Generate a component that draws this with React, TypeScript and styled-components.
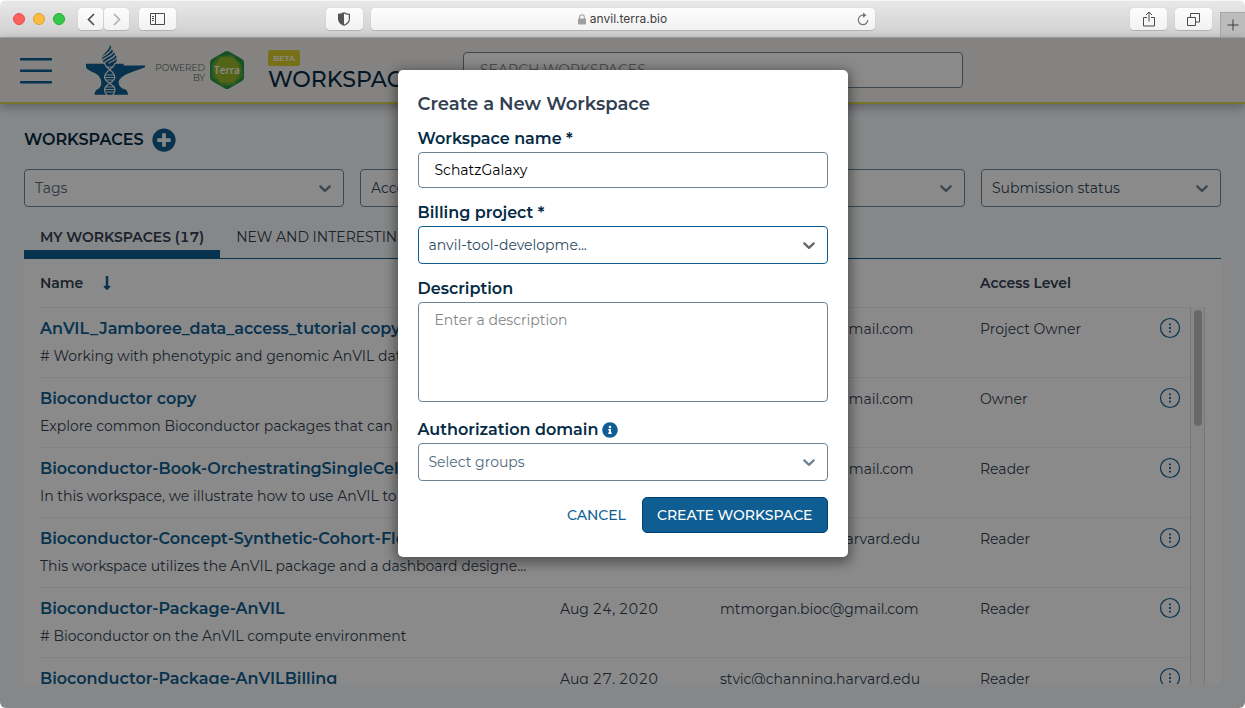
import React from "react";
import styled, { createGlobalStyle } from "styled-components";
import { FaInfoCircle, FaPlusCircle, FaLongArrowAltDown } from "react-icons/fa";

const color = {
  primary: "#0f5e93",
  primaryDark: "#004277",
  navy: "#042b45",
  text: "#333f52",
  field: "#2f4a5f",
  placeholder: "#506a7c",
  border: "#6f8495",
  rule: "#eff0f2",
  page: "#f7f9fc",
};

const GlobalStyle = createGlobalStyle`
  *, *::before, *::after { box-sizing: border-box; }
  body {
    margin: 0;
    background: #fff;
    color: ${color.text};
    font-family: Montserrat, Inter, "Open Sans", sans-serif;
    font-size: 14px;
    font-variant-numeric: tabular-nums;
    line-height: 20px;
  }
  button, input, select, textarea { font: inherit; color: inherit; }
  h1, h2 { margin: 0; }
  svg { display: block; flex: none; }
`;

/* ---------- browser window ---------- */

const Window = styled.div`
  display: flex;
  flex-direction: column;
  height: 100vh;
  min-height: 600px;
  border-radius: 6px;
  overflow: hidden;
`;

const Toolbar = styled.div`
  display: grid;
  grid-template-columns: 1fr minmax(0, 504px) 1fr;
  column-gap: 8px;
  flex: none;
  height: 38px;
  padding-top: 7px;
  background: linear-gradient(#e8e8e8, #cfcfcf);
  border-top: 1px solid #f6f6f6;
  border-bottom: 1px solid #a8a8a8;
`;

const ToolGroup = styled.div<{ $end?: boolean }>`
  display: flex;
  align-items: flex-start;
  justify-content: ${(p) => (p.$end ? "flex-end" : "flex-start")};
  gap: 8px;
  padding-left: ${(p) => (p.$end ? 0 : 13)}px;
`;

const Lights = styled.div`
  display: flex;
  align-items: center;
  gap: 8px;
  height: 22px;
  margin-right: 5px;
`;

const Light = styled.span<{ $fill: string; $edge: string }>`
  width: 12px;
  height: 12px;
  border-radius: 50%;
  background: ${(p) => p.$fill};
  border: 1px solid ${(p) => p.$edge};
`;

const Pair = styled.div`
  display: flex;
  gap: 1px;
  margin-right: 2px;
`;

const ToolButton = styled.button<{ $width?: number }>`
  display: flex;
  align-items: center;
  justify-content: center;
  width: ${(p) => p.$width ?? 37}px;
  height: 22px;
  padding: 0;
  border: 0;
  border-radius: 4px;
  background: linear-gradient(#fdfdfd, #f2f2f2);
  box-shadow: 0 0 1px #b0b0b0, 0 1px 0 #b4b4b4;
  color: #4a4a4a;

  &:disabled { color: #b0b0b0; }
`;

const Spring = styled.span`
  flex: 1;
`;

const AddressBar = styled.div`
  display: grid;
  grid-template-columns: 24px 1fr 24px;
  align-items: center;
  height: 22px;
  border-radius: 4px;
  background: linear-gradient(#fdfdfd, #f2f2f2);
  box-shadow: 0 0 1px #b0b0b0, 0 1px 0 #b4b4b4;
`;

const Address = styled.div`
  display: flex;
  grid-column: 2;
  align-items: center;
  justify-content: center;
  gap: 4px;
  color: #404040;
  font: 12px/20px Inter, "Open Sans", sans-serif;
`;

const PlainButton = styled.button`
  display: flex;
  align-items: center;
  justify-content: center;
  padding: 0;
  border: 0;
  background: none;
`;

const NewTab = styled(PlainButton)`
  align-self: flex-end;
  width: 25px;
  height: 25px;
  border-left: 1px solid #a6a6a6;
  border-top: 1px solid #a6a6a6;
  background: #bcbcbc;
  color: #3c3c3c;
`;

const Viewport = styled.div`
  position: relative;
  display: flex;
  flex-direction: column;
  flex: 1;
  min-height: 0;
  background: ${color.page};
`;

/* ---------- app header ---------- */

const Header = styled.header`
  display: flex;
  align-items: center;
  flex: none;
  height: 66px;
  padding: 0 20px;
  background: #f4f3ee;
  border-bottom: 2px solid #e0d94a;
  box-shadow: 0 3px 10px rgba(0, 0, 0, 0.3);
`;

const MenuButton = styled(PlainButton)`
  padding-top: 2px;
`;

const Brand = styled.a`
  display: flex;
  align-items: center;
  margin-left: 34px;
  color: #666;
  text-decoration: none;
`;

const Powered = styled.span`
  width: 59px;
  margin-right: 5px;
  padding-top: 6px;
  text-align: right;
  font-size: 9px;
  line-height: 10px;
`;

const HexText = styled.text`
  font: 600 10px "Open Sans", sans-serif;
  fill: #fff;
`;

const TitleBlock = styled.div`
  display: flex;
  flex-direction: column;
  align-items: flex-start;
  width: 219px;
  padding: 4px 0 0 24px;
`;

const Beta = styled.span`
  padding: 0 5px;
  border-radius: 2px;
  background: #dcd02a;
  color: #fff;
  font-size: 8px;
  font-weight: 600;
  line-height: 16px;
`;

const PageTitle = styled.h1`
  color: ${color.navy};
  font-size: 22px;
  font-weight: 500;
  line-height: 28px;
`;

const Search = styled.input`
  flex: 0 1 500px;
  height: 36px;
  padding: 0 16px;
  border: 1px solid ${color.border};
  border-radius: 4px;
  background: #fff;
  outline: 0;
  &::placeholder {
    color: #8d8d8d;
    opacity: 1;
  }
`;

/* ---------- page body ---------- */

const Main = styled.main`
  display: flex;
  flex-direction: column;
  flex: 1;
  min-height: 0;
  padding: 24px;
`;

const SectionHead = styled.div`
  display: flex;
  align-items: center;
  gap: 8px;
  height: 24px;
`;

const SectionTitle = styled.h2`
  color: ${color.navy};
  font-size: 16px;
  font-weight: 600;
  line-height: 22px;
`;

const Filters = styled.div`
  display: flex;
  gap: 16px;
  margin-top: 17px;
`;

const SelectBox = styled.div<{ $basis?: string; $active?: boolean; $light?: boolean }>`
  position: relative;
  flex: ${(p) => p.$basis ?? "1 1 0"};
  color: ${(p) => (p.$light ? color.placeholder : color.field)};

  select {
    display: block;
    width: 100%;
    height: 38px;
    padding: 0 32px 0 10px;
    appearance: none;
    border: 1px solid ${(p) => (p.$active ? color.primary : color.border)};
    border-radius: 4px;
    background: #fff;
    outline: 0;
  }
  svg {
    position: absolute;
    top: 9px;
    right: 9px;
    fill: ${(p) => (p.$active ? "#666" : color.border)};
    pointer-events: none;
  }
`;

const Tabs = styled.div`
  display: flex;
  flex: none;
  height: 44px;
  margin-top: 8px;
  border-bottom: 1px solid ${color.primary};
`;

const Tab = styled.button<{ $on?: boolean }>`
  height: 44px;
  padding: 8px 16px 0;
  border: 0;
  border-bottom: 9px solid ${(p) => (p.$on ? color.primary : "transparent")};
  background: none;
  font-weight: ${(p) => (p.$on ? 600 : 400)};
`;

const Card = styled.section`
  display: flex;
  flex: 1;
  min-height: 0;
  padding: 0 16px;
  background: #fff;
`;

const Table = styled.table`
  display: flex;
  flex-direction: column;
  flex: 1;
  min-width: 0;

  tbody, thead { display: block; }
  thead { flex: none; }
  tbody {
    flex: 1;
    min-height: 0;
    overflow: hidden;
  }
  tr {
    display: grid;
    grid-template-columns: minmax(0, 1fr) 160px 260px 150px 60px;
  }
  th, td {
    padding: 0;
    text-align: left;
  }
  th {
    display: flex;
    align-items: center;
    gap: 16px;
    height: 48px;
    font-weight: 600;
  }
  th svg { fill: ${color.primary}; }
  tbody tr {
    height: 70px;
    border-top: 1px solid ${color.rule};
  }
  td { padding-top: 11px; }
  td:last-child {
    display: flex;
    align-items: flex-start;
    justify-content: flex-end;
    padding: 9px 9px 0 0;
  }
`;

const NameCell = styled.td`
  && { padding: 10px 32px 0 0; }
`;

const WorkspaceLink = styled.a`
  display: block;
  overflow: hidden;
  white-space: nowrap;
  text-overflow: ellipsis;
  color: ${color.primary};
  font-size: 16px;
  font-weight: 600;
  line-height: 22px;
  text-decoration: none;
`;

const Summary = styled.div`
  margin-top: 6px;
  white-space: nowrap;
`;

const ScrollTrack = styled.div`
  flex: none;
  width: 15px;
  margin-top: 48px;
  padding: 3px;
  border: 1px solid #dcdcdc;
  border-width: 0 1px;
  background: #fafafa;
`;

const ScrollThumb = styled.div`
  width: 8px;
  height: 116px;
  border-radius: 4px;
  background: #c1c1c1;
`;

/* ---------- dialog ---------- */

const Overlay = styled.div`
  position: absolute;
  inset: 0;
  display: flex;
  align-items: flex-start;
  justify-content: center;
  padding-top: 32px;
  background: rgba(0, 0, 0, 0.46);
`;

const Dialog = styled.form`
  width: 450px;
  padding: 20px 20px 24px;
  border-radius: 5px;
  background: #fff;
  box-shadow: 0 3px 12px 3px rgba(0, 0, 0, 0.4);
`;

const DialogTitle = styled.h2`
  margin-bottom: 10px;
  font-size: 18px;
  font-weight: 600;
  line-height: 28px;
`;

const Field = styled.div<{ $gap?: number }>`
  margin-top: ${(p) => p.$gap ?? 14}px;
`;

const Label = styled.label`
  display: flex;
  align-items: center;
  gap: 4px;
  margin-bottom: 2px;
  color: ${color.navy};
  font-size: 16px;
  font-weight: 600;
  line-height: 22px;
  svg { fill: ${color.primary}; }
`;

const TextInput = styled.input`
  display: block;
  width: 100%;
  height: 36px;
  padding: 0 16px;
  border: 1px solid ${color.border};
  border-radius: 4px;
  color: #000;
  outline: 0;
`;

const TextArea = styled.textarea`
  display: block;
  width: 100%;
  height: 100px;
  padding: 7px 16px;
  border: 1px solid ${color.border};
  border-radius: 4px;
  resize: none;
  outline: 0;
  &::placeholder { color: #858585; opacity: 1; }
`;

const Actions = styled.div`
  display: flex;
  justify-content: flex-end;
  gap: 16px;
  margin-top: 16px;
`;

const Cancel = styled.button`
  padding: 0;
  border: 0;
  background: none;
  color: ${color.primary};
  font-weight: 500;
`;

const Submit = styled.button`
  height: 36px;
  padding: 0 14px;
  border: 1px solid ${color.primaryDark};
  border-radius: 5px;
  background: ${color.primary};
  color: #fff;
  font-weight: 500;
`;

/* ---------- drawings ---------- */

const Chevron = () => (
  <svg width="20" height="20" viewBox="0 0 20 20" aria-hidden="true">
    <path d="M4.516 7.548c0.436-0.446 1.043-0.481 1.576 0l3.908 3.747 3.908-3.747c0.533-0.481 1.141-0.446 1.574 0 0.436 0.445 0.408 1.197 0 1.615-0.406 0.418-4.695 4.502-4.695 4.502-0.217 0.223-0.502 0.335-0.787 0.335s-0.57-0.112-0.789-0.335c0 0-4.287-4.084-4.695-4.502s-0.436-1.17 0-1.615z" />
  </svg>
);

const MenuLines = () => (
  <svg width="32" height="26" viewBox="0 0 32 26" fill={color.primary} aria-hidden="true">
    <rect y="0" width="32" height="2.4" rx="0.6" />
    <rect y="11.5" width="32" height="2.4" rx="0.6" />
    <rect y="23" width="32" height="2.4" rx="0.6" />
  </svg>
);

const AnvilLogo = () => (
  <svg width="60" height="52" viewBox="86 44 60 52" aria-hidden="true">
    <path
      fill={color.primary}
      d="M86 63.8H123.6V65.6H145V67.2C138 70 131 72 126 74.5C121.500 77 118.500 79.500 118.700 83C119 86.500 122 88.800 126 89.800C127.400 91 127.700 93 128 94.700H94.500C94.700 93 95.200 91 96.500 89.800C99.800 88.600 101.500 86 101.300 82.500C101 77 97.500 74.300 93.500 72.500C90.500 71.300 87.200 69.500 86 67.200Z"
    />
    <path
      fill={color.primary}
      d="M109.800 45C111.500 47 111.600 49 113 51C115 53.500 117 56 116.800 59.500C116.700 61.500 115.500 63 114.500 64H104.700C103 62 102 59.800 102.300 57.300C102.600 54.800 104.500 53.500 106.500 51.500C108.500 49.600 109.800 47.500 109.800 45Z"
    />
    <g fill="none" stroke="#f4f3ee" strokeWidth="1.200" strokeLinecap="round">
      <path d="M103 56.600C106.500 53.500 110.500 52.500 111.600 48" />
      <path d="M102.800 60C107 56 112.500 55.500 113.500 51.500" />
      <path d="M104 63C108.500 58.500 114 59 115.300 54.500" />
      <path d="M109 63.200C111.500 60.800 115 61 116.600 58.300" />
      <path d="M104.500 63C105 68 114.800 71 114.800 77S104.500 84 104.500 89.500C104.500 92 105.500 93.500 106.500 94.700" />
      <path d="M115 63C114.500 68 104.500 71 104.500 77S115 84 115 89.500C115 92 114 93.500 113 94.700" />
      <path d="M106.500 67H113M105.700 75H113.600M105 77.500H114.400M106 80H113.300M106.500 87H113M105.300 89.500H114.200M106 92H113.500" strokeWidth="0.900" />
    </g>
  </svg>
);

const TerraHex = () => (
  <svg width="34" height="38" viewBox="0 0 34 38" role="img" aria-label="Terra">
    <path fill="#2c9440" d="M15 .6Q17 -.4 19 .6L32 8Q34 9.200 34 11.400V26.600Q34 28.800 32 30L19 37.400Q17 38.400 15 37.400L2 30Q0 28.800 0 26.600V11.400Q0 9.200 2 8Z" />
    <path fill="#55a83f" d="M8 5.500L22 4L32 14L33 25L24 34.500L11 34.500L2 25.500L1.500 14Z" />
    <path fill="#74b233" d="M17 4.500L29.500 11.500V26.500L17 33.500L4.500 26.500V11.500Z" />
    <path fill="#9ab92c" d="M10 6.500H24L31 19L24 31.500H10L3 19Z" />
    <HexText x="17" y="22.500" textAnchor="middle">Terra</HexText>
  </svg>
);

const MoreIcon = () => (
  <svg width="22" height="22" viewBox="0 0 22 22" fill="none" stroke={color.primary} aria-hidden="true">
    <circle cx="11" cy="11" r="9.500" strokeWidth="1.200" />
    <path d="M11 6.500V8.300M11 10.100V11.900M11 13.700V15.500" strokeWidth="1.800" />
  </svg>
);

const Line = ({ w, h, d, stroke = 1.3 }: { w: number; h: number; d: string; stroke?: number }) => (
  <svg width={w} height={h} viewBox={`0 0 ${w} ${h}`} fill="none" stroke="currentColor" strokeWidth={stroke} aria-hidden="true">
    <path d={d} />
  </svg>
);

/* ---------- data ---------- */

const workspaces = [
  { name: "AnVIL_Jamboree_data_access_tutorial copy", summary: "# Working with phenotypic and genomic AnVIL data", date: "Sep 23, 2020", by: "michael.schatz@gmail.com", access: "Project Owner" },
  { name: "Bioconductor copy", summary: "Explore common Bioconductor packages that can be used", date: "Sep 14, 2020", by: "michael.schatz@gmail.com", access: "Owner" },
  { name: "Bioconductor-Book-OrchestratingSingleCell", summary: "In this workspace, we illustrate how to use AnVIL to run", date: "Aug 24, 2020", by: "nitesh.turaga.h@gmail.com", access: "Reader" },
  { name: "Bioconductor-Concept-Synthetic-Cohort-Flow", summary: "This workspace utilizes the AnVIL package and a dashboard designe...", date: "Aug 27, 2020", by: "stvjc@channing.harvard.edu", access: "Reader" },
  { name: "Bioconductor-Package-AnVIL", summary: "# Bioconductor on the AnVIL compute environment", date: "Aug 24, 2020", by: "mtmorgan.bioc@gmail.com", access: "Reader" },
  { name: "Bioconductor-Package-AnVILBilling", summary: "", date: "Aug 27, 2020", by: "stvjc@channing.harvard.edu", access: "Reader" },
];

const Picker = ({ text, id, ...box }: { text: string; id?: string; $basis?: string; $active?: boolean; $light?: boolean }) => (
  <SelectBox {...box}>
    <select id={id} aria-label={id ? undefined : text}>
      <option>{text}</option>
    </select>
    <Chevron />
  </SelectBox>
);

export default function App() {
  return (
    <>
      <GlobalStyle />
      <Window>
        <Toolbar>
          <ToolGroup>
            <Lights>
              <Light $fill="#fc605c" $edge="#e2504c" />
              <Light $fill="#fdbc40" $edge="#dfa033" />
              <Light $fill="#34c84a" $edge="#27a937" />
            </Lights>
            <Pair>
              <ToolButton $width={25} aria-label="Back"><Line w={8} h={13} d="M7 1L1.500 6.500L7 12" stroke={1.6} /></ToolButton>
              <ToolButton $width={25} aria-label="Forward" disabled><Line w={8} h={13} d="M1 1L6.500 6.500L1 12" stroke={1.6} /></ToolButton>
            </Pair>
            <ToolButton aria-label="Sidebar"><Line w={15} h={12} stroke={1} d="M.5 .5H14.500V11.500H.5ZM5.500 .5V11.500M2 3.500H4M2 5.500H4M2 7.500H4" /></ToolButton>
            <Spring />
            <ToolButton aria-label="Privacy report">
              <svg width="12" height="14" viewBox="0 0 12 14" aria-hidden="true">
                <path d="M6 .7C7.500 1.800 9.300 2.200 11.400 2.300V7C11.400 10 9 12 6 13.300C3 12 .6 10 .6 7V2.300C2.700 2.200 4.500 1.800 6 .7Z" fill="none" stroke="#555" strokeWidth="1.200" />
                <path d="M6 .7V13.300C3 12 .6 10 .6 7V2.300C2.700 2.200 4.500 1.800 6 .7Z" fill="#555" />
              </svg>
            </ToolButton>
          </ToolGroup>
          <AddressBar>
            <Address>
              <svg width="8" height="11" viewBox="0 0 8 11" aria-hidden="true">
                <rect y="4.500" width="8" height="6" rx=".8" fill="#a0a0a0" />
                <path d="M1.700 5V3A2.300 2.300 0 0 1 6.300 3V5" fill="none" stroke="#a0a0a0" strokeWidth="1.100" />
              </svg>
              anvil.terra.bio
            </Address>
            <PlainButton aria-label="Reload">
              <svg width="12" height="14" viewBox="0 0 12 14" fill="none" stroke="#777" aria-hidden="true">
                <path d="M6 3.200A4.700 4.700 0 1 0 10.700 7.900" strokeWidth="1.200" />
                <path d="M6 .5L9.500 3.200L6 5.800Z" fill="#777" stroke="none" />
              </svg>
            </PlainButton>
          </AddressBar>
          <ToolGroup $end>
            <ToolButton aria-label="Share"><Line w={12} h={16} stroke={1} d="M4 6.500H.5V15H11.500V6.500H8M6 10.500V1.200M3 4L6 1L9 4" /></ToolButton>
            <ToolButton aria-label="Show tabs"><Line w={13} h={13} stroke={1} d="M.5 4.500H8.500V12.500H.5ZM3.500 4.500V.5H12.500V9H8.500" /></ToolButton>
            <NewTab aria-label="New tab"><Line w={12} h={12} stroke={1} d="M6 .5V11.500M.5 6H11.500" /></NewTab>
          </ToolGroup>
        </Toolbar>

        <Viewport>
          <Header>
            <MenuButton aria-label="Menu"><MenuLines /></MenuButton>
            <Brand href="#home">
              <AnvilLogo />
              <Powered>POWERED BY</Powered>
              <TerraHex />
            </Brand>
            <TitleBlock>
              <Beta>BETA</Beta>
              <PageTitle>WORKSPACES</PageTitle>
            </TitleBlock>
            <Search aria-label="Search workspaces" placeholder="SEARCH WORKSPACES" />
          </Header>

          <Main>
            <SectionHead>
              <SectionTitle>WORKSPACES</SectionTitle>
              <PlainButton aria-label="Create workspace"><FaPlusCircle size={24} color={color.primary} /></PlainButton>
            </SectionHead>
            <Filters>
              <Picker text="Tags" $basis="0 0 320px" $light />
              <Picker text="Access levels" />
              <Picker text="Billing project" />
              <Picker text="Submission status" $basis="0 0 240px" />
            </Filters>
            <Tabs>
              <Tab $on>MY WORKSPACES (17)</Tab>
              <Tab>NEW AND INTERESTING (2)</Tab>
            </Tabs>
            <Card>
              <Table>
                <thead>
                  <tr>
                    <th>Name <FaLongArrowAltDown size={16} /></th>
                    <th>Last Modified</th>
                    <th>Created By</th>
                    <th>Access Level</th>
                    <th aria-label="Actions" />
                  </tr>
                </thead>
                <tbody>
                  {workspaces.map((w) => (
                    <tr key={w.name}>
                      <NameCell>
                        <WorkspaceLink href={`#${w.name}`}>{w.name}</WorkspaceLink>
                        <Summary>{w.summary}</Summary>
                      </NameCell>
                      <td>{w.date}</td>
                      <td>{w.by}</td>
                      <td>{w.access}</td>
                      <td><PlainButton aria-label={`Actions for ${w.name}`}><MoreIcon /></PlainButton></td>
                    </tr>
                  ))}
                </tbody>
              </Table>
              <ScrollTrack><ScrollThumb /></ScrollTrack>
            </Card>
          </Main>

          <Overlay>
            <Dialog role="dialog" aria-labelledby="dialog-title" onSubmit={(e) => e.preventDefault()}>
              <DialogTitle id="dialog-title">Create a New Workspace</DialogTitle>
              <Field $gap={0}>
                <Label htmlFor="ws-name">Workspace name *</Label>
                <TextInput id="ws-name" defaultValue="SchatzGalaxy" />
              </Field>
              <Field>
                <Label htmlFor="ws-billing">Billing project *</Label>
                <Picker id="ws-billing" text="anvil-tool-developme..." $active />
              </Field>
              <Field>
                <Label htmlFor="ws-description">Description</Label>
                <TextArea id="ws-description" placeholder="Enter a description" />
              </Field>
              <Field $gap={17}>
                <Label htmlFor="ws-domain">Authorization domain <FaInfoCircle size={16} /></Label>
                <Picker id="ws-domain" text="Select groups" $light />
              </Field>
              <Actions>
                <Cancel type="button">CANCEL</Cancel>
                <Submit type="submit">CREATE WORKSPACE</Submit>
              </Actions>
            </Dialog>
          </Overlay>
        </Viewport>
      </Window>
    </>
  );
}
